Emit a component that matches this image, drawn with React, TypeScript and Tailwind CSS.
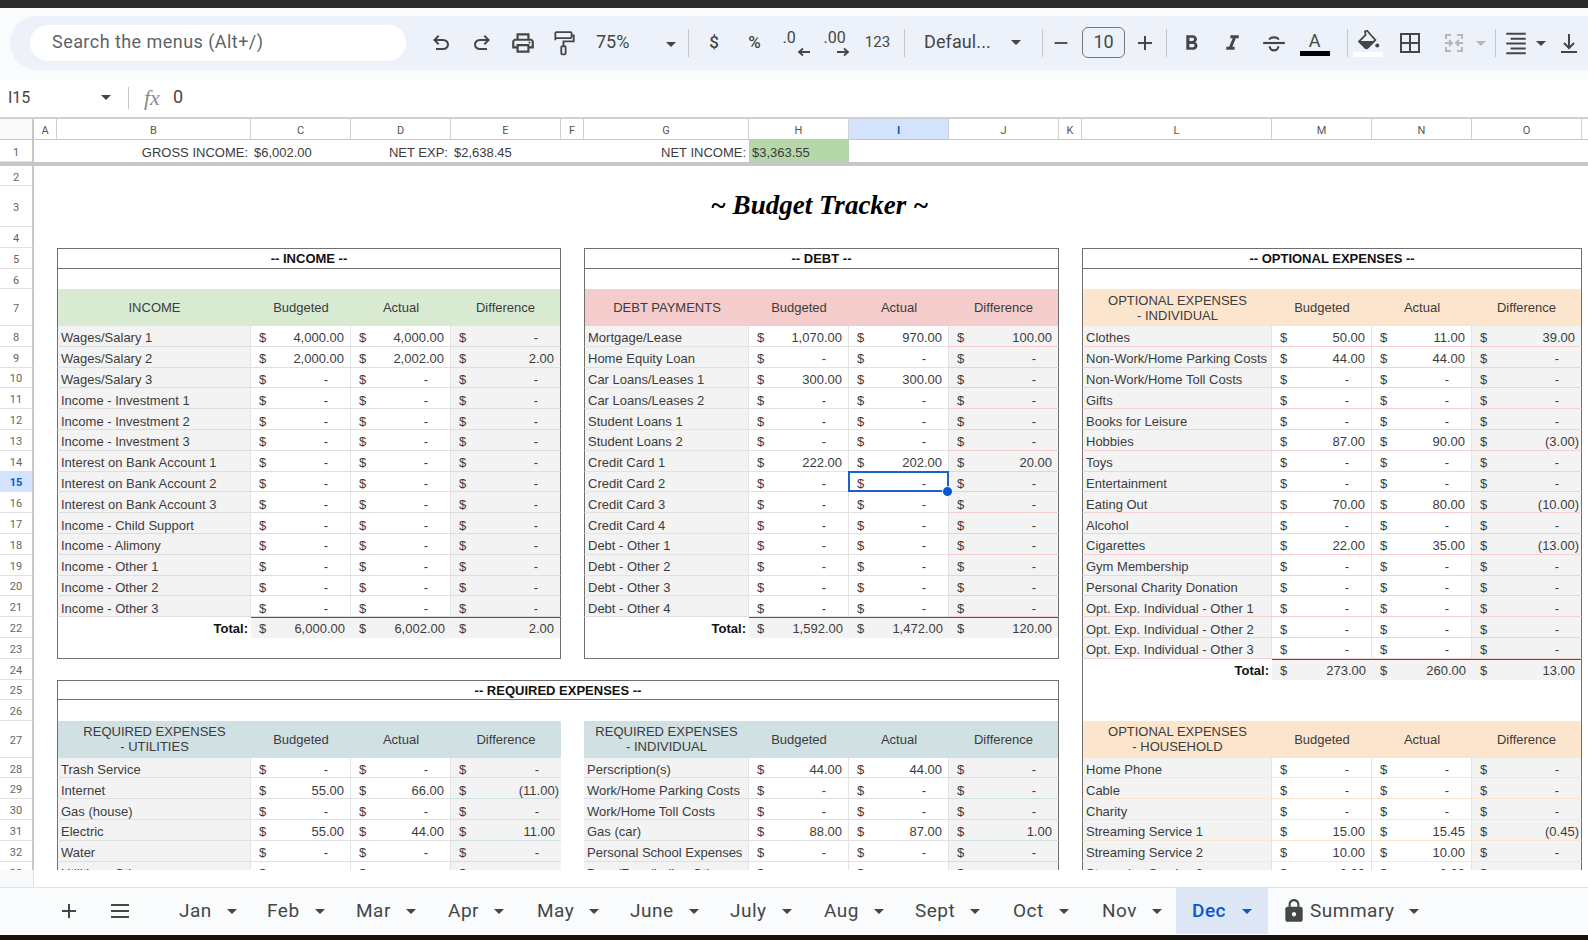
import React from "react";
import { MdOutlinePrint, MdFormatBold, MdFormatItalic, MdLock, MdAdd, MdRemove } from "react-icons/md";

const COLS =
  "grid grid-cols-[34px_23px_194px_100px_100px_110px_23px_165px_100px_100px_110px_23px_190px_100px_100px_110px_7px]";

type Theme = { head: string; line: string; dline: string };
const green: Theme = { head: "bg-[#d9ead3]", line: "border-b-[#dedede]", dline: "border-b-[#dedede]" };
const red: Theme = { head: "bg-[#f4cccc]", line: "border-b-[#e2e2e2]", dline: "border-b-[#f4cccc]" };
const pink: Theme = { head: "bg-[#fce5cd]", line: "border-b-[#f4d0d0]", dline: "border-b-[#f4d0d0]" };
const orange: Theme = { head: "bg-[#fce5cd]", line: "border-b-[#fbe6d0]", dline: "border-b-[#fbe6d0]" };
const blue: Theme = { head: "bg-[#d0e0e3]", line: "border-b-[#e0e0e0]", dline: "border-b-[#d0e0e3]" };

type Item = [string, string?, string?, string?];
const income: Item[] = [
  ["Wages/Salary 1", "4,000.00", "4,000.00"],
  ["Wages/Salary 2", "2,000.00", "2,002.00", "2.00"],
  ["Wages/Salary 3"],
  ["Income - Investment 1"],
  ["Income - Investment 2"],
  ["Income - Investment 3"],
  ["Interest on Bank Account 1"],
  ["Interest on Bank Account 2"],
  ["Interest on Bank Account 3"],
  ["Income - Child Support"],
  ["Income - Alimony"],
  ["Income - Other 1"],
  ["Income - Other 2"],
  ["Income - Other 3"],
];
const debt: Item[] = [
  ["Mortgage/Lease", "1,070.00", "970.00", "100.00"],
  ["Home Equity Loan"],
  ["Car Loans/Leases 1", "300.00", "300.00"],
  ["Car Loans/Leases 2"],
  ["Student Loans 1"],
  ["Student Loans 2"],
  ["Credit Card 1", "222.00", "202.00", "20.00"],
  ["Credit Card 2"],
  ["Credit Card 3"],
  ["Credit Card 4"],
  ["Debt - Other 1"],
  ["Debt - Other 2"],
  ["Debt - Other 3"],
  ["Debt - Other 4"],
];
const optional: Item[] = [
  ["Clothes", "50.00", "11.00", "39.00"],
  ["Non-Work/Home Parking Costs", "44.00", "44.00"],
  ["Non-Work/Home Toll Costs"],
  ["Gifts"],
  ["Books for Leisure"],
  ["Hobbies", "87.00", "90.00", "(3.00)"],
  ["Toys"],
  ["Entertainment"],
  ["Eating Out", "70.00", "80.00", "(10.00)"],
  ["Alcohol"],
  ["Cigarettes", "22.00", "35.00", "(13.00)"],
  ["Gym Membership"],
  ["Personal Charity Donation"],
  ["Opt. Exp. Individual - Other 1"],
  ["Opt. Exp. Individual - Other 2"],
  ["Opt. Exp. Individual - Other 3"],
];
const utilities: Item[] = [
  ["Trash Service"],
  ["Internet", "55.00", "66.00", "(11.00)"],
  ["Gas (house)"],
  ["Electric", "55.00", "44.00", "11.00"],
  ["Water"],
  ["Utilities - Other"],
];
const individual: Item[] = [
  ["Perscription(s)", "44.00", "44.00"],
  ["Work/Home Parking Costs"],
  ["Work/Home Toll Costs"],
  ["Gas (car)", "88.00", "87.00", "1.00"],
  ["Personal School Expenses"],
  ["Dues/Fees/Indiv - Other"],
];
const household: Item[] = [
  ["Home Phone"],
  ["Cable"],
  ["Charity"],
  ["Streaming Service 1", "15.00", "15.45", "(0.45)"],
  ["Streaming Service 2", "10.00", "10.00"],
  ["Streaming Service 3", "0.00", "0.00"],
];

type Seg =
  | { k: "none" }
  | { k: "title"; text: string }
  | { k: "blank"; bottom?: boolean }
  | { k: "head"; lines: string[]; t: Theme }
  | { k: "row"; item: Item; t: Theme; rowNo: number }
  | { k: "total"; b: string; a: string; d: string };

function segFor(block: number, r: number): Seg {
  if (block < 2) {
    if (r >= 27) {
      const t = blue;
      if (r === 27)
        return {
          k: "head",
          t,
          lines: block === 0 ? ["REQUIRED EXPENSES", "- UTILITIES"] : ["REQUIRED EXPENSES", "- INDIVIDUAL"],
        };
      return { k: "row", t, rowNo: r, item: (block === 0 ? utilities : individual)[r - 28] };
    }
    const d = block === 0 ? income : debt;
    const t = block === 0 ? green : red;
    if (r === 5) return { k: "title", text: block === 0 ? "-- INCOME --" : "-- DEBT --" };
    if (r === 6) return { k: "blank" };
    if (r === 7) return { k: "head", t, lines: [block === 0 ? "INCOME" : "DEBT PAYMENTS"] };
    if (r >= 8 && r <= 21) return { k: "row", t, rowNo: r, item: d[r - 8] };
    if (r === 22)
      return block === 0
        ? { k: "total", b: "6,000.00", a: "6,002.00", d: "2.00" }
        : { k: "total", b: "1,592.00", a: "1,472.00", d: "120.00" };
    if (r === 23) return { k: "blank", bottom: true };
    return { k: "none" };
  }
  if (r === 5) return { k: "title", text: "-- OPTIONAL EXPENSES --" };
  if (r === 6) return { k: "blank" };
  if (r === 7) return { k: "head", t: pink, lines: ["OPTIONAL EXPENSES", "- INDIVIDUAL"] };
  if (r >= 8 && r <= 23) return { k: "row", t: pink, rowNo: r, item: optional[r - 8] };
  if (r === 24) return { k: "total", b: "273.00", a: "260.00", d: "13.00" };
  if (r === 25 || r === 26) return { k: "blank" };
  if (r === 27) return { k: "head", t: orange, lines: ["OPTIONAL EXPENSES", "- HOUSEHOLD"] };
  return { k: "row", t: orange, rowNo: r, item: household[r - 28] };
}

function Money({ v, fill, line, sel, rb, top = "pt-[4px]" }: { v?: string; fill: string; line: string; sel?: boolean; rb?: string; top?: string }) {
  const val = v ?? "-";
  const pr = val === "-" ? "pr-[22px]" : val.startsWith("(") ? "pr-[2px]" : "pr-[6px]";
  return (
    <div className={`relative flex items-center justify-between pl-[8px] leading-[15px] ${top} ${pr} ${fill} ${line} ${rb ?? ""}`}>
      <span>$</span>
      <span>{val}</span>
      {sel && (
        <>
          <div className="absolute -left-px -top-px -right-px -bottom-px border-2 border-[#1a62d2]" />
          <div className="absolute -right-[5px] -bottom-[6px] z-10 h-[11px] w-[11px] rounded-full border border-white bg-[#0b57d0]" />
        </>
      )}
    </div>
  );
}

function Block({ seg, lb, rb, sel }: { seg: Seg; lb: boolean; rb: boolean; sel?: boolean }) {
  const L = lb ? "border-l border-l-[#6f6f6f]" : "";
  const R = rb ? "border-r border-r-[#6f6f6f]" : "";
  if (seg.k === "none") {
    return <div className="col-span-4" />;
  }
  if (seg.k === "title") {
    return (
      <div className="col-span-4 flex items-center justify-center border border-[#6f6f6f] font-bold leading-[15px] text-[#111]">
        {seg.text}
      </div>
    );
  }
  if (seg.k === "blank") {
    return <div className={`col-span-4 ${L} ${R} ${seg.bottom ? "border-b border-b-[#6f6f6f]" : ""}`} />;
  }
  if (seg.k === "head") {
    const c = `flex items-center justify-center text-center leading-[15px] ${seg.t.head}`;
    return (
      <>
        <div className={`${c} ${L} flex-col`}>
          {seg.lines.map((l) => (
            <span key={l}>{l}</span>
          ))}
        </div>
        <div className={c}>Budgeted</div>
        <div className={c}>Actual</div>
        <div className={`${c} ${R}`}>Difference</div>
      </>
    );
  }
  if (seg.k === "total") {
    const c = "bg-[#f3f3f3] border-t border-t-[#555]";
    return (
      <>
        <div className={`flex items-center justify-end pr-[3px] pt-[2px] font-bold leading-[15px] text-[#111] ${L}`}>Total:</div>
        <Money v={seg.b} fill={c} line="" top="pt-[1px]" />
        <Money v={seg.a} fill={c} line="" top="pt-[1px]" />
        <Money v={seg.d} fill={c} line="" rb={R} top="pt-[1px]" />
      </>
    );
  }
  const { item, t } = seg;
  const vline = "border-r border-r-[#e4e4e4]";
  return (
    <>
      <div className={`flex items-center overflow-hidden whitespace-nowrap bg-[#f3f3f3] pl-[3px] pt-[4px] leading-[15px] border-b ${t.line} ${L} ${vline}`}>
        {item[0]}
      </div>
      <Money v={item[1]} fill="bg-white" line={`border-b ${t.line}`} rb={vline} />
      <Money v={item[2]} fill="bg-white" line={`border-b ${t.line}`} rb={vline} sel={sel} />
      <Money v={item[3]} fill="bg-[#f3f3f3]" line={`border-b ${t.dline}`} rb={R} />
    </>
  );
}

function rowHeight(r: number) {
  if (r === 2) return "h-[20px]";
  if (r === 3) return "h-[41.3px]";
  if (r === 4 || r === 5 || r === 6) return "h-[20.7px]";
  if (r === 7 || r === 27) return "h-[36.6px]";
  return "h-[20.8px]";
}

function RowNum({ n, active }: { n: number; active?: boolean }) {
  return (
    <div
      className={`flex items-center justify-center border-b border-b-[#e0e0e0] border-r-2 border-r-[#c7c7c7] pt-[3px] font-['Roboto',sans-serif] text-[11px] leading-[13px] ${
        active ? "bg-[#d3e3fd] font-bold text-[#0b57d0]" : "bg-white text-[#666]"
      }`}
    >
      {n}
    </div>
  );
}

function SheetRow({ r }: { r: number }) {
  const h = rowHeight(r);
  if (r === 2 || r === 4) {
    return (
      <div className={`${COLS} ${h}`}>
        <RowNum n={r} />
      </div>
    );
  }
  if (r === 3) {
    return (
      <div className={`${COLS} ${h}`}>
        <RowNum n={r} />
        <div />
        <div className="col-span-14 flex items-center justify-center pb-[3px] font-['Liberation_Serif',serif] text-[27px] font-bold italic leading-[30px] text-black">
          ~ Budget Tracker ~
        </div>
      </div>
    );
  }
  const wide = r === 25 || r === 26;
  const req = r >= 25;
  return (
    <div className={`${COLS} ${h}`}>
      <RowNum n={r} active={r === 15} />
      <div />
      {wide ? (
        r === 25 ? (
          <div className="col-span-9 flex items-center justify-center border border-[#6f6f6f] pt-[1px] font-bold leading-[15px] text-[#111]">
            -- REQUIRED EXPENSES --
          </div>
        ) : (
          <div className="col-span-9 border-x border-x-[#6f6f6f]" />
        )
      ) : (
        <>
          <Block seg={segFor(0, r)} lb rb={!req} />
          <div />
          <Block seg={segFor(1, r)} lb={!req} rb sel={r === 15} />
        </>
      )}
      <div />
      <Block seg={segFor(2, r)} lb rb />
      <div />
    </div>
  );
}

function Caret({ c = "border-t-[#444]" }: { c?: string }) {
  return <span className={`inline-block h-0 w-0 border-x-[5px] border-t-[5px] border-x-transparent ${c}`} />;
}
function Sep() {
  return <div className="h-[28px] w-px shrink-0 bg-[#c7c7c7]" />;
}
function Tool({ w, children }: { w: string; children: React.ReactNode }) {
  return <div className={`flex h-[32px] shrink-0 items-center justify-center text-[#444746] ${w}`}>{children}</div>;
}

function Toolbar() {
  return (
    <div className="h-[72px] bg-[#f9fbfd] pt-2">
      <div className="ml-[10px] flex h-[54px] items-center rounded-l-[27px] bg-[#edf2fa] pl-[20px] font-['Roboto',sans-serif]">
        <div className="flex h-[36px] w-[376px] shrink-0 items-center rounded-full bg-white pb-[4px] pl-[22px] text-[18px] tracking-[0.45px] text-[#5f6368]">
          Search the menus (Alt+/)
        </div>
        <div className="w-[14px] shrink-0" />
        <Tool w="w-[41px]">
          <svg viewBox="0 -960 960 960" className="h-[24px] w-[24px]" fill="currentColor">
            <path d="M280-200v-80h284q63 0 109.5-40T720-420q0-60-46.5-100T564-560H312l104 104-56 56-200-200 200-200 56 56-104 104h252q97 0 166.5 63T800-420q0 94-69.5 157T564-200H280Z" />
          </svg>
        </Tool>
        <Tool w="w-[41px]">
          <svg viewBox="0 -960 960 960" className="h-[24px] w-[24px]" fill="currentColor">
            <path d="M396-200q-97 0-166.5-63T160-420q0-94 69.5-157T396-640h252L544-744l56-56 200 200-200 200-56-56 104-104H396q-63 0-109.5 40T240-420q0 60 46.5 100T396-280h284v80H396Z" />
          </svg>
        </Tool>
        <Tool w="w-[41px]">
          <MdOutlinePrint className="h-[26px] w-[26px]" />
        </Tool>
        <Tool w="w-[41px]">
          <svg viewBox="0 0 24 24" className="h-[26px] w-[26px]" fill="none" stroke="currentColor" strokeWidth="1.7">
            <rect x="4" y="2" width="15" height="5.5" rx="1" />
            <path d="M19 5h2v5.5H11.5V15" />
            <rect x="9.5" y="15" width="4" height="7.5" rx="1" />
            <path d="M4 7.5v2" />
          </svg>
        </Tool>
        <div className="flex h-[32px] w-[97px] shrink-0 items-center pb-[4px] pl-[12px] text-[18px] text-[#444746]">
          <span className="w-[70px]">75%</span>
          <span className="flex pt-[6px]">
            <Caret />
          </span>
        </div>
        <div className="ml-[7px] mr-[5px]">
          <Sep />
        </div>
        <Tool w="w-[40px]">
          <span className="text-[17px] font-medium">$</span>
        </Tool>
        <Tool w="w-[41px]">
          <span className="text-[17px] font-medium">%</span>
        </Tool>
        <Tool w="w-[41px]">
          <div className="relative h-[26px] w-[26px]">
            <span className="absolute left-0 top-[-2px] text-[16px] leading-[20px]">.0</span>
            <svg viewBox="0 0 14 10" className="absolute bottom-[-1px] right-[-2px] h-[10px] w-[14px]" fill="none" stroke="currentColor" strokeWidth="1.8">
              <path d="M13 5H3M6 1.5 2 5l4 3.5" />
            </svg>
          </div>
        </Tool>
        <Tool w="w-[41px]">
          <div className="relative h-[26px] w-[26px]">
            <span className="absolute left-0 top-[-2px] text-[16px] leading-[20px]">.00</span>
            <svg viewBox="0 0 14 10" className="absolute bottom-[-1px] right-0 h-[10px] w-[14px]" fill="none" stroke="currentColor" strokeWidth="1.8">
              <path d="M1 5h10M8 1.5 12 5 8 8.5" />
            </svg>
          </div>
        </Tool>
        <Tool w="w-[41px]">
          <span className="pb-[2px] text-[15px]">123</span>
        </Tool>
        <div className="ml-[6px]">
          <Sep />
        </div>
        <div className="flex h-[32px] w-[131px] shrink-0 items-center pb-[4px] pl-[19px] text-[18px] tracking-[0.1px] text-[#444746]">
          <span className="w-[87px]">Defaul...</span>
          <span className="flex pt-[2px]">
            <Caret />
          </span>
        </div>
        <div className="ml-[6px]">
          <Sep />
        </div>
        <Tool w="w-[36px]">
          <MdRemove className="h-[22px] w-[22px]" />
        </Tool>
        <div className="mb-[1px] ml-[3px] flex h-[31px] w-[43px] shrink-0 items-center justify-center rounded-[6px] border border-[#747775] pb-[2px] text-[18px] text-[#444746]">
          10
        </div>
        <Tool w="w-[39px]">
          <MdAdd className="h-[24px] w-[24px]" />
        </Tool>
        <div className="ml-[2px] mr-[4px]">
          <Sep />
        </div>
        <Tool w="w-[41px]">
          <MdFormatBold className="h-[25px] w-[25px]" />
        </Tool>
        <Tool w="w-[41px]">
          <MdFormatItalic className="h-[25px] w-[25px]" />
        </Tool>
        <Tool w="w-[41px]">
          <svg viewBox="0 0 24 24" className="h-[26px] w-[26px]" fill="none" stroke="currentColor" strokeWidth="2">
            <path d="M2 12h20" />
            <path d="M8 9c0-3 8-3 8 0M8 15c0 5 8 5 8 0" />
          </svg>
        </Tool>
        <Tool w="w-[41px]">
          <div className="flex flex-col items-center">
            <span className="text-[18px] leading-[20px]">A</span>
            <span className="h-[5px] w-[30px] bg-black" />
          </div>
        </Tool>
        <div className="ml-[12px]">
          <Sep />
        </div>
        <Tool w="w-[40px]">
          <div className="flex flex-col items-center">
            <svg viewBox="0 0 24 20" className="h-[20px] w-[24px]" fill="currentColor">
              <path d="M9 1.5l2-1 3.4 4 5 5.5-7.5 7.5a2 2 0 0 1-2.8 0L3 11.5 9.6 5z" fillOpacity="0" stroke="currentColor" strokeWidth="1.8" />
              <path d="M3.5 11h15.6l-6.9 6.5a2 2 0 0 1-2.8 0z" />
              <circle cx="21.3" cy="15.5" r="2" />
            </svg>
            <span className="mt-[2px] h-[5px] w-[30px] bg-white" />
          </div>
        </Tool>
        <Tool w="w-[44px]">
          <svg viewBox="0 0 24 24" className="h-[24px] w-[24px]" fill="none" stroke="currentColor" strokeWidth="2">
            <rect x="3" y="3" width="18" height="18" />
            <path d="M12 3v18M3 12h18" />
          </svg>
        </Tool>
        <Tool w="w-[44px]">
          <svg viewBox="0 0 24 24" className="h-[24px] w-[24px] text-[#b4b8be]" fill="none" stroke="currentColor" strokeWidth="2">
            <path d="M9 4H4v4M4 16v4h5M15 4h5v4M20 16v4h-5M3 12h6M21 12h-6M7 9l3 3-3 3M17 9l-3 3 3 3" />
          </svg>
        </Tool>
        <div className="flex w-[14px] shrink-0 justify-start">
          <Caret c="border-t-[#b4b8be]" />
        </div>
        <div className="ml-[5px]">
          <Sep />
        </div>
        <Tool w="w-[40px]">
          <svg viewBox="0 0 24 24" className="h-[26px] w-[26px]" fill="none" stroke="currentColor" strokeWidth="1.9">
            <path d="M3 3.5h18M7 8h14M3 12.5h18M7 17h14M3 21.5h18" />
          </svg>
        </Tool>
        <div className="flex w-[10px] shrink-0 justify-center">
          <Caret />
        </div>
        <Tool w="w-[46px]">
          <svg viewBox="0 0 24 24" className="h-[24px] w-[24px]" fill="none" stroke="currentColor" strokeWidth="2">
            <path d="M12 3v14M7 12l5 5 5-5M4 21h16" />
          </svg>
        </Tool>
      </div>
    </div>
  );
}

const colHeads: [string, string][] = [
  ["A", ""], ["B", ""], ["C", ""], ["D", ""], ["E", ""], ["F", ""], ["G", ""], ["H", ""],
  ["I", "active"], ["J", ""], ["K", ""], ["L", ""], ["M", ""], ["N", ""], ["O", ""], ["", ""],
];

const tabs: [string, string][] = [
  ["Jan", "w-[88px]"],
  ["Feb", "w-[89px]"],
  ["Mar", "w-[92px]"],
  ["Apr", "w-[89px]"],
  ["May", "w-[93px]"],
  ["June", "w-[100px]"],
  ["July", "w-[94px]"],
  ["Aug", "w-[91px]"],
  ["Sept", "w-[98px]"],
  ["Oct", "w-[89px]"],
  ["Nov", "w-[74px]"],
];

export default function App() {
  const rows = Array.from({ length: 32 }, (_, i) => i + 2);
  return (
    <div className="flex h-[940px] w-[1588px] flex-col overflow-hidden bg-white font-['Liberation_Sans',Arial,sans-serif] text-[13px] text-[#3c3c3c]">
      <div className="h-2 shrink-0 bg-[#2b2b2b]" />
      <Toolbar />
      <div className="flex h-[37px] shrink-0 items-center pb-[2px] font-['Roboto',sans-serif] text-[#444746]">
        <span className="ml-2 w-[93px] text-[16px]">I15</span>
        <Caret />
        <div className="ml-[17px] h-[22px] w-px bg-[#c7c7c7]" />
        <span className="ml-[15px] w-[29px] font-['Liberation_Serif',serif] text-[22px] italic text-[#8a8a8a]">fx</span>
        <span className="pb-[2px] text-[18px]">0</span>
      </div>

      <div className="relative h-[753px] shrink-0 overflow-hidden border-t-2 border-t-[#d0d0d0]">
        <div className={`${COLS} h-[21px] border-b border-b-[#c7c7c7] font-['Roboto',sans-serif] text-[11px] leading-[13px] text-[#555]`}>
          <div className="border-r-2 border-r-[#c7c7c7] bg-[#f8f9fa]" />
          {colHeads.map(([c, a], i) => (
            <div
              key={i}
              className={`flex items-center justify-center border-r border-r-[#d0d0d0] pt-[2px] ${
                a ? "bg-[#d3e3fd] font-bold text-[#0b57d0]" : "bg-white"
              }`}
            >
              {c}
            </div>
          ))}
        </div>
        <div className={`${COLS} h-[26px] border-b-4 border-b-[#c7c7c7] leading-[15px]`}>
          <RowNum n={1} />
          <div className="col-span-2 flex items-center justify-end pr-[3px] pt-[2px]">GROSS INCOME:</div>
          <div className="flex items-center pl-[3px] pt-[2px]">$6,002.00</div>
          <div className="flex items-center justify-end pr-[3px] pt-[2px]">NET EXP:</div>
          <div className="flex items-center pl-[3px] pt-[2px]">$2,638.45</div>
          <div />
          <div className="flex items-center justify-end pr-[3px] pt-[2px]">NET INCOME:</div>
          <div className="flex items-center bg-[#b6d7a8] pl-[3px] pt-[2px]">$3,363.55</div>
        </div>
        {rows.map((r) => (
          <SheetRow key={r} r={r} />
        ))}
      </div>

      <div className="h-[17px] shrink-0 bg-white">
        <div className="h-full w-[34px] border-r border-r-[#e0e0e0] bg-[#f8f9fa]" />
      </div>

      <div className="flex h-[48px] shrink-0 items-start border-t border-t-[#e3e3e3] bg-[#f9fbfd] font-['Roboto',sans-serif] text-[19px] tracking-[0.5px] text-[#444746]">
        <div className="flex h-[46px] w-[179px] shrink-0 items-center">
          <MdAdd className="ml-[57px] h-[24px] w-[24px]" />
          <svg viewBox="0 0 24 24" className="ml-[27px] h-[24px] w-[24px]" fill="none" stroke="currentColor" strokeWidth="2">
            <path d="M3 6h18M3 12h18M3 18h18" />
          </svg>
        </div>
        {tabs.map(([t, w]) => (
          <div key={t} className={`flex h-[46px] shrink-0 items-center gap-[15px] ${w}`}>
            <span>{t}</span>
            <Caret />
          </div>
        ))}
        <div className="flex h-[46px] w-[92px] shrink-0 items-center gap-[16px] bg-[#dde7f5] pl-[16px] font-medium text-[#0b57d0]">
          <span>Dec</span>
          <Caret c="border-t-[#0b57d0]" />
        </div>
        <div className="ml-[13px] flex h-[46px] shrink-0 items-center">
          <MdLock className="h-[26px] w-[26px]" />
          <span className="ml-[3px]">Summary</span>
          <span className="ml-[14px] flex">
            <Caret />
          </span>
        </div>
      </div>
      <div className="flex-1 bg-[#17120c]" />
    </div>
  );
}
